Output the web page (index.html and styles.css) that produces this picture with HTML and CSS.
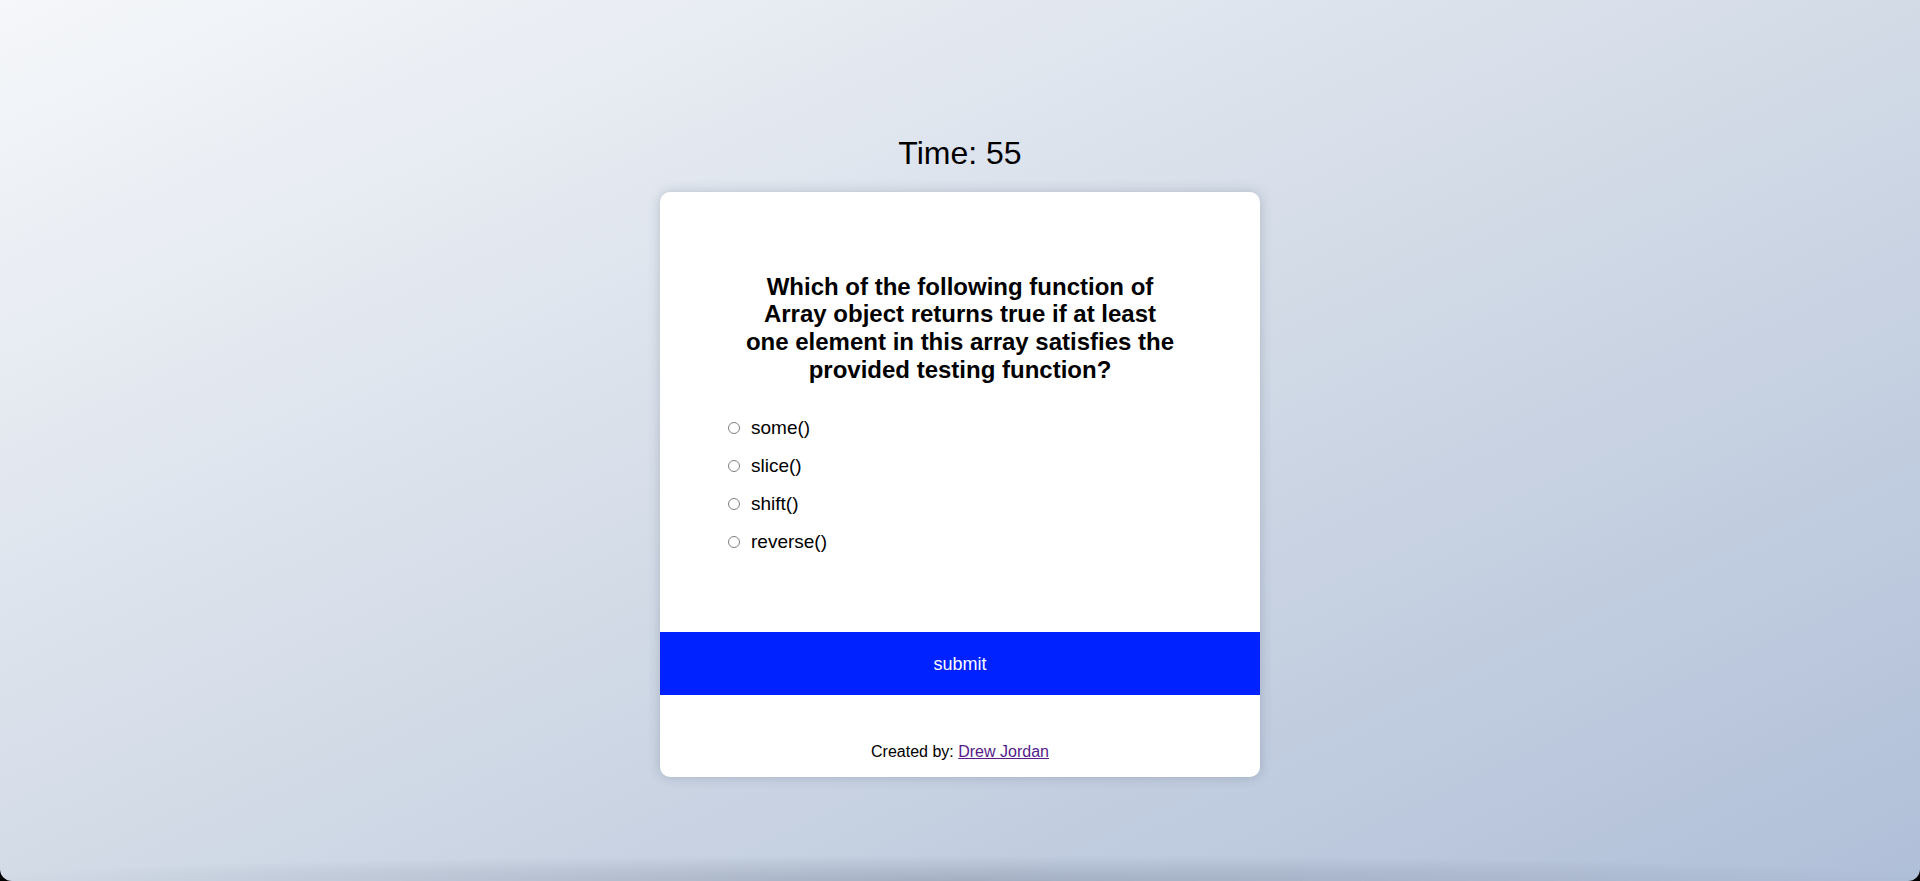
FILE: index.html
```html
<!DOCTYPE html>
<html lang="en">
<head>
<meta charset="utf-8">
<title>Quiz</title>
<link rel="stylesheet" href="styles.css">
</head>
<body>
<div class="window">
  <div class="timer">Time: 55</div>
  <div class="card">
    <div class="card-body">
      <h2 class="question">Which of the following function of Array object returns true if at least one element in this array satisfies the provided testing function?</h2>
      <div class="options">
        <label class="option"><input type="radio" name="answer" class="radio"><span>some()</span></label>
        <label class="option"><input type="radio" name="answer" class="radio"><span>slice()</span></label>
        <label class="option"><input type="radio" name="answer" class="radio"><span>shift()</span></label>
        <label class="option"><input type="radio" name="answer" class="radio"><span>reverse()</span></label>
      </div>
    </div>
    <button class="submit" type="button">submit</button>
    <div class="footer">Created by: <a class="author" href="#">Drew Jordan</a></div>
  </div>
</div>
</body>
</html>
```
FILE: styles.css
```css
html {
  background: #000;
}
body {
  margin: 0;
  font-family: "Liberation Sans", Arial, Helvetica, sans-serif;
  color: #000;
}
.window {
  height: 881px;
  box-sizing: border-box;
  padding-top: 135px;
  display: flex;
  flex-direction: column;
  align-items: center;
  border-radius: 0 0 12px 12px;
  background:
    radial-gradient(ellipse 52% 26px at 50% 100%, rgba(70, 80, 100, 0.24), rgba(70, 80, 100, 0)),
    linear-gradient(to bottom right, #f5f7fa 0%, #d3dbe7 50%, #b0bfd8 100%);
}
.timer {
  font-size: 32px;
  line-height: 36.8px;
  margin-bottom: 20px;
}
.card {
  width: 600px;
  background: #fff;
  border-radius: 10px;
  box-shadow: 0 0 12px rgba(60, 70, 95, 0.25);
  overflow: hidden;
  display: flex;
  flex-direction: column;
}
.card-body {
  padding: 81px 0 80px;
  display: flex;
  flex-direction: column;
  align-items: center;
}
.question {
  width: 434px;
  margin: 0;
  font-size: 24px;
  font-weight: bold;
  line-height: 27.6px;
  text-align: center;
}
.options {
  align-self: flex-start;
  margin: 34px 0 0 68px;
  display: flex;
  flex-direction: column;
  gap: 17px;
}
.option {
  display: flex;
  align-items: center;
  gap: 11px;
  font-size: 19px;
  line-height: 21px;
}
.radio {
  appearance: none;
  -webkit-appearance: none;
  width: 12px;
  height: 12px;
  margin: 0;
  border: 1px solid #7f7f7f;
  border-radius: 50%;
  background: #fff;
  box-sizing: border-box;
}
.submit {
  height: 63px;
  border: 0;
  margin: 0;
  padding: 2px 0 0;
  background: #0022ff;
  color: #fff;
  font-family: inherit;
  font-size: 18px;
}
.footer {
  padding: 48px 0 15px;
  text-align: center;
  font-size: 16px;
  line-height: 18.4px;
}
.author {
  color: #551a8b;
}
```
